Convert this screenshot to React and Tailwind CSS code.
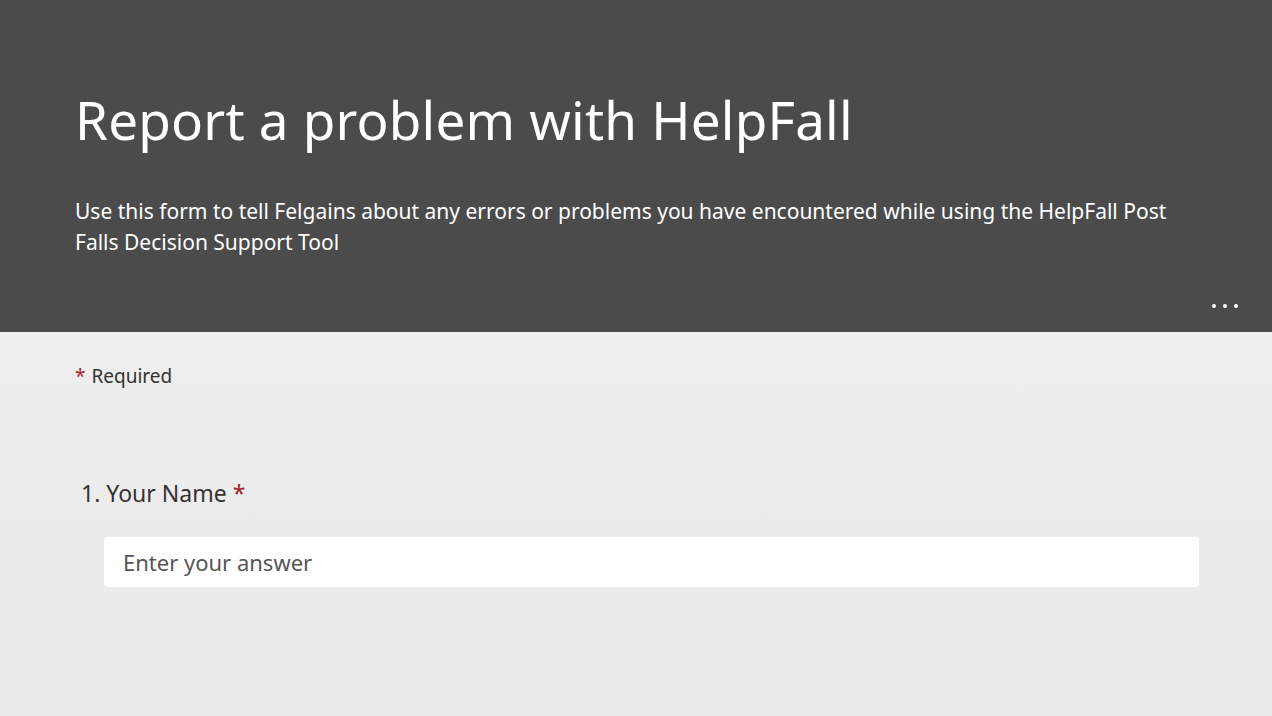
import React from 'react';

const font = { fontFamily: '"Noto Sans", "Open Sans", sans-serif' };

export default function App() {
  return (
    <div className="w-[1272px] h-[716px] overflow-hidden bg-[#ebebeb]" style={font}>
      {/* header banner */}
      <header className="relative h-[332px] bg-[#4b4b4b] px-[75px] pt-[84px] text-white">
        <h1 className="text-[53px] leading-[72px] font-normal tracking-[0.2px]">
          Report a problem with HelpFall
        </h1>
        <p className="mt-[40px] max-w-[1110px] text-[21px] leading-[31px]">
          Use this form to tell Felgains about any errors or problems you have encountered while using the HelpFall Post Falls Decision Support Tool
        </p>
        <div className="absolute right-[34px] bottom-[24px] flex gap-[7px]">
          <span className="w-[4px] h-[4px] rounded-full bg-white" />
          <span className="w-[4px] h-[4px] rounded-full bg-white" />
          <span className="w-[4px] h-[4px] rounded-full bg-white" />
        </div>
      </header>

      {/* form body */}
      <main className="bg-gradient-to-b from-[#eeeeee] to-[#eaeaea] h-[384px] px-[75px] pt-[30px]">
        <div className="text-[19px] leading-[28px] text-[#333]">
          <span className="text-[#a4262c] mr-[6px]">*</span>Required
        </div>

        <div className="mt-[87px] pl-[6px] text-[23px] leading-[32px] text-[#333]">
          1. Your Name <span className="text-[#a4262c]">*</span>
        </div>

        <div className="mt-[28px] ml-[29px] w-[1095px] h-[50px] bg-white rounded-[4px] flex items-center px-[19px]">
          <span className="text-[22px] text-[#555]">Enter your answer</span>
        </div>
      </main>
    </div>
  );
}
